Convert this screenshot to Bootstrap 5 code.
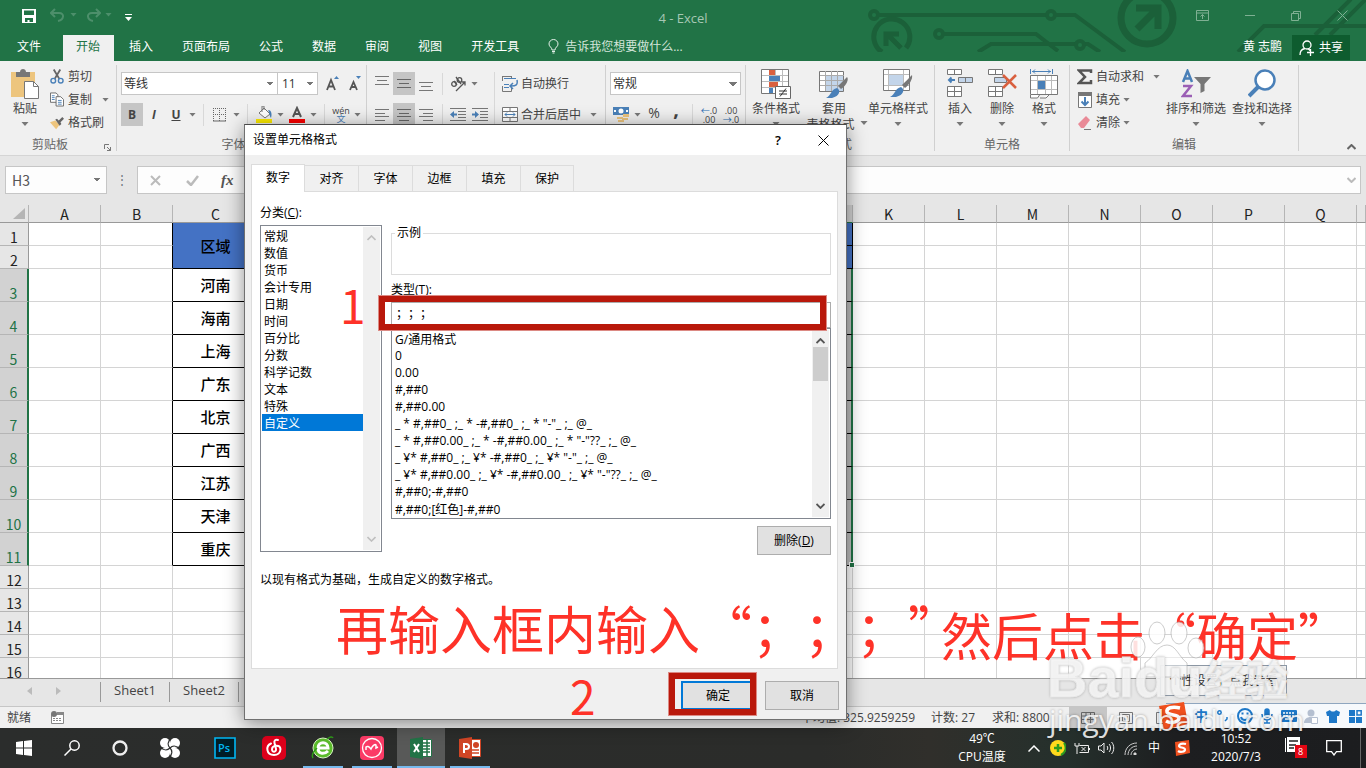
<!DOCTYPE html>
<html lang="zh-CN">
<head>
<meta charset="utf-8">
<meta name="viewport" content="width=device-width, initial-scale=1">
<title>4 - Excel</title>
<link href="https://cdn.jsdelivr.net/npm/bootstrap@5.3.0/dist/css/bootstrap.min.css" rel="stylesheet">
<style>
:root{--xl:#217346;--line:#d4d4d4;--ink:#444}
body{font:12px/16px "Open Sans","Noto Sans CJK SC",sans-serif;color:var(--ink);background:#e6e6e6;height:100vh;overflow:hidden;text-spacing-trim:space-all}
button{border:0;background:none;padding:0;color:inherit;font:inherit;line-height:16px}
svg{display:block;flex:none}
.appbar{background:var(--xl)}
.titlebar{height:35px}
.tabbar{height:26px}
.circuit{right:0;top:0}
.doc-title{color:#a6c7b4;font-size:13px}
.tabbar a{color:#fff;text-decoration:none;padding:4px 14px 0 15px;height:26px;white-space:nowrap}
.tabbar a.file-tab{padding:4px 22px 0 17px}
.tabbar a.on{background:#f0f0f0;color:var(--xl);padding:4px 14px 0 13px}
.share-btn{background:#0e5c2f;color:#fff;width:58px;height:25px}
.ribbon{height:95px;background:#f0f0f0;border-bottom:1px solid #d5d5d5;padding-top:4px}
.rgroup{height:86px;border-right:1px solid #d0d0d0;position:relative;flex:none}
.rbody{height:71px}
.rlabel{color:#666;text-align:center;line-height:17px}
.g-clip{width:117px}.g-font{width:250px}.g-align{width:239px}.g-num{width:140px}.g-style{width:189px}.g-cell{width:135px}.g-edit{width:229px}
.g-clip .rlabel,.g-font .rlabel,.g-align .rlabel,.g-num .rlabel{padding-right:16px}
.t22{width:22px;height:23px;display:flex;align-items:center;justify-content:center}
.t22.on{background:#c5c5c5}
.car{display:inline-block;width:11px;height:4px;background:#777;clip-path:polygon(18% 0,82% 0,50% 100%);flex:none}
.vsep{width:1px;height:22px;background:#d8d8d8;margin:0 5px;flex:none}
.combo{height:23px;border:1px solid #c6c6c6;border-radius:0;background-color:#fff;appearance:none;font:inherit;line-height:16px;padding:0 2px;color:#333;background-image:linear-gradient(45deg,transparent 50%,#777 50%),linear-gradient(-45deg,transparent 50%,#777 50%);background-size:4px 4px;background-position:right 7px center,right 3px center;background-repeat:no-repeat}
.bigbtn{display:flex;flex-direction:column;align-items:center;text-align:center;height:71px;padding-top:4px;white-space:nowrap}
.bigbtn svg{margin-bottom:2px}
.bigbtn .car{margin-top:5px}
.smallbtn{display:flex;align-items:center;height:23px;gap:4px;white-space:nowrap}
.fbar{height:49px;padding:10px 5px 11px}
.namebox{width:102px;height:28px;border:1px solid #c6c6c6;font:14px/20px "Noto Sans CJK SC",sans-serif;color:#555;padding:0 6px;background-color:#fdfdfd;background-position:right 9px center,right 5px center}
.formula{border:1px solid #c6c6c6;background:#fdfdfd;height:28px;width:0}
.formula input{border:0;background:none;outline:0;min-width:0}
.sheet{flex:1 1 0;min-height:0;overflow:hidden;background:#fff}
.gridtab{table-layout:fixed;width:100%;border-collapse:separate;border-spacing:0;font-family:"Noto Sans CJK SC",sans-serif;font-size:14px;color:#222}
.gridtab th,.gridtab td{padding:0;border-right:1px solid var(--line);border-bottom:1px solid var(--line);text-align:center;overflow:hidden;font-weight:400;line-height:16px}
.gridtab thead th{height:18px;background:#e6e6e6;border-right-color:#b5b5b5;border-bottom-color:#999}
.gridtab thead th.sel{background:#d2d2d2;border-bottom-color:var(--xl)}
.gridtab tbody th{background:#e6e6e6;vertical-align:bottom;border-right-color:#999;border-bottom-color:#b5b5b5}
.gridtab .s23{height:23px}.gridtab .s33{height:33px}
.gridtab tbody th.sel{background:#d2d2d2;color:var(--xl);border-right:2px solid var(--xl)}
.gridtab td.dk{border-color:#000}.gridtab td.dkr{border-right-color:#000}
.gridtab td.area{font-size:15px;font-weight:500;color:#000}
.gridtab td.blue{background:#4472c4}
.gridtab td.pick{background:#bfbfbf;border-right:2px solid var(--xl)}
.gridtab td.pick-end{position:relative;overflow:visible}
.fill-handle{right:-4px;bottom:-3px;width:6px;height:6px;background:var(--xl);border:1px solid #fff}
.corner{display:block;margin:3px 3px 3px auto;width:12px;height:11px;background:#b5b5b5;clip-path:polygon(100% 0,100% 100%,0 100%)}
.stabs{height:29px;border-top:1px solid #999;border-bottom:1px solid #c6c6c6;font-size:13px}
.stabs a{color:#444;text-decoration:none;width:69px;height:20px;border-left:1px solid #999;text-align:center;margin-top:3px;line-height:17px}
.stat{height:21px;background:#f0f0f0;white-space:nowrap}
.taskbar{height:40px;background:linear-gradient(90deg,#2b2d2c 0,#2b2c2a 60%,#302f2b 68%,#25302c 78%,#1d1e20 86%,#1c1d1f);color:#fff}
.app{width:48px;height:40px;display:flex;align-items:center;justify-content:center;margin-right:1px;position:relative}
.app.tight{margin-right:0}
.app.run::after{content:"";position:absolute;left:4px;right:4px;bottom:0;height:2px;background:#76b9ed}
.app.act{background:#585958}.app.act::after{left:0;right:0}
.tray{width:24px;height:40px;display:flex;align-items:center;justify-content:center}
.twoline{font-size:12px;line-height:18px;text-align:center}
/* dialog */
.dlg{left:244px;top:124px;width:603px;background:#f0f0f0;border:1px solid #707070;border-top-color:#4a4a4a;color:#000;box-shadow:0 3px 18px rgba(0,0,0,.45);z-index:5}
.dlg-head{height:30px;background:#fff;padding-left:8px}
.dlg-tabs{padding:9px 0 0 6px;height:36px;align-items:flex-end}
.dlg-tabs button{height:26px;width:54px;border:1px solid #dcdcdc;border-left:0;border-bottom:0}
.dlg-tabs button:last-child{width:53px}
.dlg-tabs button.on{width:54px;height:28px;background:#fff;border-left:1px solid #dcdcdc;margin-bottom:-1px;padding-bottom:2px;z-index:1}
.panel{background:#fff;border:1px solid #dcdcdc;margin:0 8px 0 6px;padding:13px 6px 0 8px;height:478px}
.lbox{border:1px solid #828790;background:#fff;padding:1px}
.lbox select{border:0;outline:0;overflow:hidden;background:none;font:inherit;padding:0;color:#000;appearance:none;min-width:0}
.lbox option{height:17px;min-height:17px;line-height:16px;padding:0 2px 1px;white-space:pre}
.lbox option:checked{background:#0078d7 linear-gradient(#0078d7,#0078d7);color:#fff}
.sbar{width:17px;background:#f0f0f0}
.cat{width:122px;height:327px}
.types{height:191px}
.sample{border:1px solid #dcdcdc;height:50px;margin:0;padding:0 0 0 3px}
.sample legend{float:none;width:auto;font-size:12px;line-height:16px;padding:0 2px;margin:0}
.typein{height:26px;border:1px solid #acacac;width:100%;padding:0 4px 5px;outline:0;color:#000;font-family:"Noto Sans CJK SC",sans-serif;text-spacing-trim:space-all}
.dbtn{width:74px;height:29px;border:1px solid #adadad;background:#e1e1e1}
.dbtn.main{border:2px solid #0078d7}
/* annotations */
.redbox{border:6px solid #b9180b;outline:1px solid #dc8a84;z-index:7;pointer-events:none}
.rb1{left:134px;top:171px;width:447px;height:34px}
.rb2{left:424px;top:548px;width:87px;height:42px}
.note{color:#fe3228;z-index:8;white-space:nowrap;font-family:"Noto Sans CJK SC",sans-serif;text-spacing-trim:space-all}
.n1{left:340px;top:279px;font-size:46px;line-height:50px}
.n2{left:570px;top:670px;font-size:46px;line-height:50px}
.n3{left:336px;top:598px;font-size:52px;line-height:60px}
.n4{left:941px;top:604px;font-size:51px;line-height:60px}
.tip{right:79px;bottom:72px;width:127px;height:31px;border:1px solid #8d98a5;background:#f3f3f3;z-index:6;color:#333}
.ime{right:0;bottom:40px;width:200px;height:25px;background:#f6f9fc;border-top:1px solid #8fa6bf;z-index:6}
.ime button{width:22px;height:24px;display:flex;align-items:center;justify-content:center}
.wm{z-index:9;white-space:nowrap;color:rgba(255,255,255,.85);text-shadow:0 0 3px rgba(0,0,0,.35);pointer-events:none}
.wm1{left:1047px;top:646px;font:700 56px/64px "Liberation Sans",sans-serif;-webkit-text-stroke:1px #e8e8e8}
.wm2{left:1204px;top:652px;font:700 42px/52px "Noto Sans CJK SC",sans-serif;-webkit-text-stroke:1px #e8e8e8}
.wm3{left:1049px;top:700px;font:400 30px/40px "Open Sans",sans-serif}
.paw{left:1130px;top:620px;z-index:9;opacity:.85;pointer-events:none}
</style>
</head>
<body class="d-flex flex-column position-relative">

<header class="appbar position-relative flex-shrink-0">
  <svg class="circuit position-absolute" width="501" height="52" viewBox="865 0 501 52" fill="none" stroke="#1b6039" stroke-width="4">
    <circle cx="874" cy="15" r="4"/><path d="M878 15H1047"/><circle cx="1051" cy="15" r="4"/><path d="M1055 15h20l50 37"/>
    <path d="M882 52a18 18 0 1 1 24-4" stroke-width="5"/><path d="M886 46V34h13M888 35l13 13" stroke-width="5"/>
    <circle cx="939" cy="34" r="4"/><path d="M943 34h93l22 17M978 52l13-8h85M1084 44h4l12 8"/><circle cx="1080" cy="45" r="4"/>
    <circle cx="1147" cy="18" r="26" stroke-width="7"/><path d="M1136 8h22v21M1157 9l-20 20" stroke-width="7"/>
    <path d="M1238 52l26-26h102M1315 35l36-36M1330 35l36-36"/>
  </svg>
  <div class="titlebar d-flex align-items-center position-relative">
    <button aria-label="保存" style="margin-left:22px;margin-bottom:4px"><svg width="14" height="14" viewBox="0 0 14 14"><path fill="#fff" fill-rule="evenodd" d="M0 0h14v14H0zM2 1.500V6h10V1.500zM3 9v4h2.500v-2h2v2H11V9z"/></svg></button>
    <button aria-label="撤销" class="d-flex align-items-center" style="margin:0 0 6px 14px"><svg width="15" height="14" viewBox="0 0 15 14" fill="none" stroke="#4d8f6b" stroke-width="2"><path d="M5 1L1 5l4 4M1 5h8c6 0 5 7-1 8"/></svg><i class="car" style="background:#4d8f6b;margin-left:3px"></i></button>
    <button aria-label="恢复" class="d-flex align-items-center" style="margin:0 0 6px 7px"><svg width="15" height="14" viewBox="0 0 15 14" fill="none" stroke="#4d8f6b" stroke-width="2"><path d="M10 1l4 4-4 4M14 5H6c-6 0-5 7 1 8"/></svg><i class="car" style="background:#4d8f6b;margin-left:2px"></i></button>
    <button aria-label="自定义" style="margin-left:11px"><svg width="7" height="7" viewBox="0 0 7 7"><path fill="#fff" d="M0 0h7v1H0zM0 3h7L3.500 7z"/></svg></button>
    <span class="doc-title position-absolute start-50 translate-middle-x">4 - Excel</span>
    <div class="ms-auto d-flex align-items-center position-relative" style="gap:36px;margin:0 18px 4px 0">
      <svg width="13" height="11" viewBox="0 0 13 11" fill="none" stroke="#7fb093"><path d="M.5.5h12v10H.5zM.5 3h12M6.500 9V4.500M4.500 6.500l2-2 2 2"/></svg>
      <svg width="10" height="11" viewBox="0 0 10 11" stroke="#7fb093"><path d="M0 5.500h10"/></svg>
      <svg width="10" height="10" viewBox="0 0 10 10" fill="none" stroke="#7fb093"><path d="M.5 2.500h7v7h-7zM2.500 2V.5h7v7H8"/></svg>
      <svg width="11" height="11" viewBox="0 0 11 11" stroke="#7fb093"><path d="M.5.5l10 10M10.500.5l-10 10"/></svg>
    </div>
  </div>
  <nav class="tabbar d-flex position-relative">
    <a class="file-tab" href="#">文件</a><a class="on" href="#">开始</a><a href="#">插入</a><a href="#">页面布局</a><a href="#">公式</a><a href="#">数据</a><a href="#">审阅</a><a href="#">视图</a><a href="#">开发工具</a>
    <a href="#" class="d-flex" style="color:#d3e5da;gap:5px"><svg width="12" height="15" viewBox="0 0 12 15" fill="none" stroke="#e5f0e9"><path d="M4 11C4 8 1 8 1 5a4.500 4.500 0 0 1 9 0c0 3-3 3-3 6zM4 12.500h3M4.500 14h2"/></svg>告诉我您想要做什么...</a>
    <span class="ms-auto text-white pt-1" style="margin-right:10px">黄 志鹏</span>
    <button class="share-btn d-flex align-items-center justify-content-center gap-1" style="margin-right:16px"><svg width="16" height="16" viewBox="0 0 16 16" fill="none" stroke="#fff" stroke-width="1.300"><circle cx="8" cy="5" r="4"/><path d="M1 15c0-4 2-6 5-6.500M9 8.500l2 2M8 12.500h7M11.500 9v7"/></svg>共享</button>
  </nav>
</header>

<section class="ribbon d-flex flex-shrink-0">
  <div class="rgroup g-clip">
    <div class="rbody d-flex">
      <button class="bigbtn" style="width:50px"><svg width="30" height="30" viewBox="0 0 30 30"><path fill="#edc57e" d="M1 3h24v25H1z"/><path fill="#777" d="M6 3h4c0-4 6-4 6 0h4v5H6z"/><path fill="#fff" stroke="#777" d="M14.500 12.500h9l5 5v12h-14z"/><path fill="none" stroke="#777" d="M23.500 12.500v5h5"/></svg>粘贴<i class="car"></i></button>
      <div>
        <button class="smallbtn"><svg width="14" height="16" viewBox="0 0 15 16" fill="none" stroke-width="2"><path stroke="#666" d="M4 0l6 10M11 0L5 10"/><g stroke="#4a80b8"><circle cx="3.500" cy="12" r="2.500" stroke-width="1.500"/><circle cx="11.500" cy="12" r="2.500" stroke-width="1.500"/></g></svg>剪切</button>
        <button class="smallbtn"><svg width="14" height="15" viewBox="0 0 15 15" fill="#fff" stroke="#666"><path d="M.5.500h6l2 2v8h-8z"/><path d="M6.500 4.500h5l3 3v7h-8z"/><path stroke="#4a80b8" d="M2 3.500h3M2 5.500h3M2 7.500h3M8.500 8.500h4M8.500 10.500h4M8.500 12.500h4"/></svg>复制<i class="car ms-1"></i></button>
        <button class="smallbtn"><svg width="14" height="14" viewBox="0 0 16 14"><path fill="#edc57e" d="M0 6l6-2 5 5-4 5z"/><path fill="#666" d="M6 3l2-1 2 2 4-4 2 2-4 4 1 2-2 2z"/></svg>格式刷</button>
      </div>
    </div>
    <div class="rlabel">剪贴板</div>
    <svg class="position-absolute" style="right:5px;bottom:0" width="7" height="7" viewBox="0 0 7 7" fill="none" stroke="#777"><path d="M.5 5V.5H5M3 3l3.500 3.500M6.500 3v3.500H3"/></svg>
  </div>

  <div class="rgroup g-font">
    <div class="rbody" style="padding:7px 0 0 4px">
      <div class="d-flex align-items-center">
        <select class="combo" aria-label="字体" style="width:157px"><option>等线</option></select><select class="combo border-start-0" aria-label="字号" style="width:40px;padding-left:4px"><option>11</option></select>
        <button class="t22 ms-1" aria-label="增大字号"><svg width="14" height="15" viewBox="0 0 14 15" fill="none" stroke="#555" stroke-width="1.800"><path d="M1 14L5 4l4 10M2.500 10.500h5"/><path fill="#4a80b8" stroke="none" d="M8 3h5l-2.500-3z"/></svg></button>
        <button class="t22" aria-label="减小字号"><svg width="14" height="15" viewBox="0 0 14 15" fill="none" stroke="#555" stroke-width="1.800"><path d="M2 14l3.500-8L9 14M3.500 11h4"/><path fill="#4a80b8" stroke="none" d="M8 0h5l-2.500 3z"/></svg></button>
      </div>
      <div class="d-flex align-items-center" style="margin-top:8px">
        <button class="t22 on fw-bold">B</button><button class="t22 fst-italic fw-bold">I</button><button class="t22 fw-bold text-decoration-underline">U</button><i class="car"></i><i class="vsep"></i>
        <button class="t22" aria-label="边框"><svg width="14" height="14" viewBox="0 0 14 14" stroke="#666" fill="none"><path stroke-dasharray="1 1" d="M0 .5h13M0 6.500h13M.5 0v13M6.500 0v13M12.500 0v13"/><path d="M0 13h13"/></svg></button><i class="car"></i><i class="vsep"></i>
        <button class="t22" aria-label="填充颜色"><svg width="17" height="17" viewBox="0 0 17 17"><path fill="#fff" stroke="#777" d="M8 2l6 6-5 4-6-5z"/><path fill="none" stroke="#777" d="M6 6V0h2v4"/><path fill="#4a80b8" d="M12 4c4 0 4 5 3 8-2-2-1-5-3-8z"/><path fill="#ffed00" d="M0 13h16v4H0z"/></svg></button><i class="car"></i>
        <button class="t22" aria-label="字体颜色"><svg width="16" height="17" viewBox="0 0 16 17"><path fill="none" stroke="#555" stroke-width="2" d="M4 11l4-9 4 9M5 8h6"/><path fill="#f00" d="M0 13h16v4H0z"/></svg></button><i class="car"></i><i class="vsep"></i>
        <button class="t22" aria-label="拼音" style="flex-direction:column;line-height:8px;font-size:9px">wén<span style="color:#4a80b8">文</span></button><i class="car"></i>
      </div>
    </div>
    <div class="rlabel">字体</div>
  </div>

  <div class="rgroup g-align">
    <div class="rbody d-flex" style="padding:7px 0 0 4px">
      <div>
        <div class="d-flex align-items-center">
          <button class="t22" aria-label="顶端对齐"><svg width="14" height="15" viewBox="0 0 14 15" stroke="#777"><path d="M0 .5h14M2 4.500h10M0 8.500h14"/></svg></button><button class="t22 on" aria-label="垂直居中"><svg width="14" height="15" viewBox="0 0 14 15" stroke="#666"><path d="M0 3.500h14M2 7.500h10M0 11.500h14"/></svg></button><button class="t22" aria-label="底端对齐"><svg width="14" height="15" viewBox="0 0 14 15" stroke="#777"><path d="M0 6.500h14M2 10.500h10M0 14.500h14"/></svg></button><i class="vsep" style="margin-right:4px"></i>
        </div>
        <div class="d-flex align-items-center" style="margin-top:8px">
          <button class="t22" aria-label="左对齐"><svg width="14" height="12" viewBox="0 0 14 12" stroke="#777"><path d="M0 .5h14M0 4.500h10M0 7.500h14M0 11.500h10"/></svg></button><button class="t22 on" aria-label="居中"><svg width="14" height="12" viewBox="0 0 14 12" stroke="#666"><path d="M0 .5h14M2 4.500h10M0 7.500h14M2 11.500h10"/></svg></button><button class="t22" aria-label="右对齐"><svg width="14" height="12" viewBox="0 0 14 12" stroke="#777"><path d="M0 .5h14M4 4.500h10M0 7.500h14M4 11.500h10"/></svg></button><i class="vsep" style="margin-right:4px"></i>
        </div>
      </div>
      <div style="width:48px;border-right:1px solid #d8d8d8">
        <div class="d-flex align-items-center"><button class="t22" aria-label="方向"><svg width="17" height="16" viewBox="0 0 17 16" fill="none" stroke="#555" stroke-width="1.300"><circle cx="4" cy="8" r="2.300"/><path d="M4 5l3 4M6 1l5 7"/><circle cx="9.500" cy="4" r="2.300"/><path d="M6 15l9-9M11.500 6H15v3.500"/></svg></button><i class="car"></i></div>
        <div class="d-flex align-items-center" style="margin-top:8px"><button class="t22" aria-label="减少缩进"><svg width="16" height="13" viewBox="0 0 16 13"><path stroke="#777" d="M0 .5h16M8 3.500h8M8 6.500h8M8 9.500h8M0 12.500h16"/><path fill="#4a80b8" d="M0 6.500L4 3v2.500h3v2H4V10z"/></svg></button><button class="t22" aria-label="增加缩进"><svg width="16" height="13" viewBox="0 0 16 13"><path stroke="#777" d="M0 .5h16M8 3.500h8M8 6.500h8M8 9.500h8M0 12.500h16"/><path fill="#4a80b8" d="M7 6.500L3 3v2.500H0v2h3V10z"/></svg></button></div>
      </div>
      <div style="padding-left:7px">
        <button class="smallbtn" style="gap:3px"><svg width="16" height="16" viewBox="0 0 16 16" fill="none"><path stroke="#777" d="M.5 0v5M.5 10v5.500h9V12M9.500 0v2"/><path stroke="#4a80b8" d="M2 2.500h12M2 8.500h5M2 11.500h5"/><path stroke="#777" d="M0 .5h10"/><path stroke="#4a80b8" stroke-width="1.500" d="M15 4c1 5-1 6-6 6M11 7l-3 3 3 3"/></svg>自动换行</button>
        <button class="smallbtn" style="gap:3px;margin-top:8px"><svg width="16" height="15" viewBox="0 0 16 15" fill="#fff" stroke="#777"><path d="M.5.500h15v14H.5zM.5 4.500h15M.5 10.500h15M8 .5v4M8 10.500v4"/><path stroke="#4a80b8" d="M3 7.500h10M5 5.500l-2 2 2 2M11 5.500l2 2-2 2"/></svg>合并后居中<i class="car ms-1"></i></button>
      </div>
    </div>
    <div class="rlabel">对齐方式</div>
  </div>

  <div class="rgroup g-num">
    <div class="rbody" style="padding:7px 0 0 4px">
      <select class="combo d-block" aria-label="数字格式" style="width:131px"><option>常规</option></select>
      <div class="d-flex align-items-center" style="margin-top:8px">
        <button class="t22" aria-label="会计格式"><svg width="16" height="16" viewBox="0 0 16 16"><path fill="#4a80b8" d="M0 0h16v8H0z"/><circle cx="8" cy="4" r="2.500" fill="#fff"/><path fill="#fff" d="M1 3h2v2H1zM13 3h2v2h-2z"/><path fill="#edc57e" d="M10 7h6v3h-6zM9 11h6v2H9zM4 10h6v2H4zM5 13h6v2H5z"/></svg></button><i class="car"></i>
        <button class="t22 pb-1" style="font-size:14px">%</button><button class="t22 fw-bold" style="font-size:20px;line-height:8px;align-items:flex-start;padding-top:2px">,</button><i class="vsep"></i>
        <button class="t22" aria-label="增加小数位" style="flex-direction:column;font-size:9px;line-height:9px;letter-spacing:0"><span><span style="color:#2d6fb5">←</span>.0</span><span>.00</span></button>
        <button class="t22" aria-label="减少小数位" style="flex-direction:column;font-size:9px;line-height:9px"><span>.00</span><span><span style="color:#2d6fb5">→</span>.0</span></button>
      </div>
    </div>
    <div class="rlabel">数字</div>
  </div>

  <div class="rgroup g-style">
    <div class="rbody d-flex" style="padding-left:4px">
      <button class="bigbtn" style="width:52px"><svg width="30" height="30" viewBox="0 0 30 30"><path fill="#fff" stroke="#777" d="M.5.5h27v24H.5z"/><path stroke="#bbb" d="M1 6.500h26M1 12.500h26M1 18.500h26M14.500 1v23M21.500 1v23"/><path fill="#d9603f" d="M8 1h6v5H8zM8 13h9v5H8z"/><path fill="#4a80b8" d="M8 7h11v5H8zM8 19h4v5H8z"/><path fill="#fff" stroke="#666" d="M14.500 17.500h15v12h-15z"/><path stroke="#333" d="M18 22h8M18 25h8M25 19.500l-6 8"/></svg>条件格式<i class="car"></i></button>
      <button class="bigbtn" style="width:64px"><svg width="30" height="30" viewBox="0 0 30 30"><path fill="#fff" stroke="#777" d="M.5 2.500h24v20H.5z"/><path fill="#c3d5ea" d="M6 7h18v15H6z"/><path stroke="#aaa" d="M1 6.500h24M1 11.500h24M1 16.500h24M6.500 2v20M12.500 2v20M18.500 2v20"/><path fill="#777" d="M28 8c2 2 0 8-6 12l-3-3c4-4 7-7 9-9z"/><path fill="#4a80b8" d="M18 19c4 2 3 8-5 10H7c5-2 5-9 11-10z"/></svg><span style="line-height:15px;padding-left:8px">套用<span class="pe-2"></span><br>表格格式<i class="car ms-1 mb-1"></i></span></button>
      <button class="bigbtn" style="width:64px"><svg width="30" height="30" viewBox="0 0 30 30"><path fill="#fff" stroke="#777" d="M.5.500h26v21H.5z"/><path stroke="#bbb" d="M1 5.500h25M1 16.500h25M5.500 1v20M20.500 1v20"/><path fill="#c3d5ea" d="M6 6h14v10H6z"/><path fill="#777" d="M29 6c1 4-3 10-7 13l-3-3c4-4 7-7 10-10z"/><path fill="#4a80b8" d="M18 18c4 2 3 8-5 10H7c5-2 5-9 11-10z"/></svg>单元格样式<i class="car"></i></button>
    </div>
    <div class="rlabel">样式</div>
  </div>

  <div class="rgroup g-cell">
    <div class="rbody d-flex" style="padding-left:4px">
      <button class="bigbtn" style="width:42px"><svg width="28" height="30" viewBox="0 0 28 30" fill="#fff" stroke="#777"><path d="M1.500.5h14v5h-14zM8.500.5v5M1.500 17.500h14v10h-14zM8.500 17.500v10M1.500 22.500h14"/><path fill="#c3d5ea" d="M12.500 8.500h14v5h-14zM19.500 8.500v5"/><path fill="none" stroke="#4a80b8" stroke-width="2" d="M9 11H3M5.500 8.500L3 11l2.500 2.500"/></svg>插入<i class="car"></i></button>
      <button class="bigbtn" style="width:42px"><svg width="30" height="30" viewBox="0 0 30 30" fill="#fff" stroke="#777"><path d="M1.500.5h14v5h-14zM8.500.5v5M1.500 17.500h14v10h-14zM8.500 17.500v10M1.500 22.500h14"/><path fill="#c3d5ea" d="M7.500 8.500h12v5h-12z"/><path fill="none" stroke="#d9603f" stroke-width="2.500" d="M16 6l13 13M29 6L16 19"/></svg>删除<i class="car"></i></button>
      <button class="bigbtn" style="width:42px"><svg width="28" height="30" viewBox="0 0 28 30" fill="#fff" stroke="#777"><path d="M.5 6.500h27v19H.5z"/><path stroke="#bbb" d="M1 11.500h26M1 20.500h26M7.500 7v18M15.500 7v18M21.500 7v18"/><path fill="#4a80b8" stroke="none" d="M8 12h7v8H8z"/><path fill="none" stroke="#4a80b8" d="M.5 0v5M22.500 0v5M2 2.500h19M5 .5l-2 2 2 2M18 .5l2 2-2 2"/><path d="M.5 26v3h7l2-3M10 29h6l3-3"/></svg>格式<i class="car"></i></button>
    </div>
    <div class="rlabel">单元格</div>
  </div>

  <div class="rgroup g-edit">
    <div class="rbody d-flex" style="padding-left:7px">
      <div style="width:86px">
        <button class="smallbtn" style="gap:3px"><svg width="16" height="16" viewBox="0 0 16 16"><path fill="none" stroke="#555" stroke-width="2.500" d="M14 4V1.500H2l6 6.500-6 6h12V11"/></svg>自动求和<i class="car ms-1"></i></button>
        <button class="smallbtn" style="gap:3px"><svg width="16" height="16" viewBox="0 0 16 16"><path fill="#fff" stroke="#777" d="M1.500 2.500h13v13h-13z"/><path fill="#777" d="M1 0h14v4H1z"/><path fill="none" stroke="#4a80b8" stroke-width="2" d="M8 5v8M4.500 9.500L8 13l3.500-3.500"/></svg>填充<i class="car" style="margin-left:-2px"></i></button>
        <button class="smallbtn" style="gap:3px"><svg width="16" height="14" viewBox="0 0 16 14"><path fill="#e98a97" d="M1 8l8-8 4 4-6 8H4z"/><path stroke="#777" d="M7 13.500h7"/></svg>清除<i class="car" style="margin-left:-2px"></i></button>
      </div>
      <button class="bigbtn" style="width:66px"><svg width="30" height="30" viewBox="0 0 30 30" fill="none" stroke-width="2.500"><path stroke="#4a80b8" d="M2 13L6.500 2 11 13M3.500 9.500h6"/><path stroke="#9b5fb5" d="M2 17h8L2 27h9"/><path fill="#777" d="M13 8h17l-6.500 7v7l-4 2v-9z"/></svg>排序和筛选<i class="car"></i></button>
      <button class="bigbtn" style="width:66px"><svg width="28" height="30" viewBox="0 0 28 30"><path stroke="#4a80b8" stroke-width="4" d="M1 27l10-10"/><circle cx="17" cy="11" r="9.500" fill="#fff" stroke="#4a80b8" stroke-width="2.500"/></svg>查找和选择<i class="car"></i></button>
    </div>
    <div class="rlabel">编辑</div>
  </div>
  <button class="ms-auto align-self-end" aria-label="折叠功能区" style="margin:0 10px 5px 0"><svg width="9" height="6" viewBox="0 0 9 6" fill="none" stroke="#666" stroke-width="2"><path d="M.5 5l4-4 4 4"/></svg></button>
</section>

<section class="fbar d-flex flex-shrink-0 align-items-center">
  <select class="combo namebox" aria-label="名称框"><option>H3</option></select>
  <span class="text-secondary text-center" style="width:30px">⋮</span>
  <div class="formula flex-grow-1 d-flex align-items-center">
    <button aria-label="取消输入" style="margin-left:12px"><svg width="11" height="11" viewBox="0 0 11 11" stroke="#bbb" stroke-width="2"><path d="M1 1l9 9M10 1l-9 9"/></svg></button>
    <button aria-label="输入" style="margin-left:25px"><svg width="13" height="11" viewBox="0 0 13 11" fill="none" stroke="#bbb" stroke-width="2.500"><path d="M1 6l4 4 7-9"/></svg></button>
    <button style="margin-left:22px;font:italic 700 15px/16px 'Liberation Serif',serif;color:#555">fx</button>
    <input class="flex-grow-1" aria-label="编辑栏">
    <svg class="me-1" width="9" height="6" viewBox="0 0 9 6" fill="none" stroke="#bbb" stroke-width="2"><path d="M.5 1l4 4 4-4"/></svg>
  </div>
</section>

<main class="sheet">
  <table class="gridtab" id="grid">
    <colgroup><col style="width:29px"><col style="width:72px"><col style="width:72px"><col style="width:86px"><col style="width:85px"><col style="width:85px"><col style="width:85px"><col style="width:85px"><col style="width:85px"><col style="width:85px"><col style="width:84px"><col style="width:72px"><col style="width:72px"><col style="width:72px"><col style="width:72px"><col style="width:72px"><col style="width:72px"><col style="width:72px"><col></colgroup>
    <thead></thead><tbody></tbody>
  </table>
</main>

<footer class="flex-shrink-0">
  <div class="stabs d-flex">
    <div class="d-flex align-items-center" style="width:100px;gap:24px;padding-left:27px;height:24px"><svg width="5" height="8" viewBox="0 0 5 8"><path fill="#bbb" d="M5 0v8L0 4z"/></svg><svg width="5" height="8" viewBox="0 0 5 8"><path fill="#bbb" d="M0 0v8l5-4z"/></svg></div>
    <a href="#">Sheet1</a><a href="#">Sheet2</a><a href="#">Sheet3</a>
  </div>
  <div class="stat d-flex align-items-center">
    <span style="margin-left:7px;width:44px">就绪</span>
    <svg width="13" height="13" viewBox="0 0 13 13"><path fill="#fff" stroke="#888" d="M.5 3.500h12v9H.5z"/><path fill="#888" d="M6 1h7v3H6z"/><circle cx="3" cy="3" r="3" fill="#777"/><path stroke="#888" stroke-dasharray="2 1" d="M2 7.500h9M2 9.500h9"/></svg>
    <div class="ms-auto d-flex align-items-center" style="width:566px"><span class="text-end" style="width:115px">平均值: 325.9259259</span><span style="margin-left:16px;width:61px">计数: 27</span><span style="width:77px">求和: 8800</span>
      <button class="d-flex align-items-center justify-content-center" aria-label="普通视图" style="width:38px;height:21px;background:#c6c6c6"><svg width="14" height="12" viewBox="0 0 14 12" fill="none" stroke="#666"><path d="M.5.5h13v11H.5zM.5 4h13M.5 7.500h13M5 .5v11M9.500.5v11"/></svg></button>
      <button aria-label="页面布局" style="margin-left:12px"><svg width="14" height="12" viewBox="0 0 14 12" fill="none" stroke="#777"><path d="M.5.5h13v11H.5zM3.500 2.500h7v7h-7zM5 5h4M5 7h4"/></svg></button>
      <button aria-label="分页预览" style="margin-left:23px"><svg width="14" height="12" viewBox="0 0 14 12" fill="none" stroke="#777"><path d="M.5.5h13v11H.5zM4.500.5v6h5v-6"/></svg></button>
    </div>
  </div>
  <div class="taskbar d-flex align-items-center">
    <button class="app tight" aria-label="开始"><svg width="16" height="16" viewBox="0 0 16 16" fill="#fff"><path d="M0 2l7-1v6.500H0zM8 1l8-1v7.500H8zM0 8.500h7V15l-7-1zM8 8.500h8V16l-8-1z"/></svg></button>
    <button class="app tight" aria-label="搜索"><svg width="16" height="16" viewBox="0 0 16 16" fill="none" stroke="#fff" stroke-width="1.500"><circle cx="10.500" cy="5.500" r="4.700"/><path d="M7 9l-6.500 6.500"/></svg></button>
    <button class="app tight" aria-label="Cortana"><svg width="16" height="16" viewBox="0 0 16 16" fill="none" stroke="#eee" stroke-width="2.300"><circle cx="8" cy="8" r="6.500"/></svg></button>
    <button class="app" aria-label="风车" style="margin-left:2px;margin-right:7px"><svg width="20" height="20" viewBox="0 0 20 20" fill="#fff"><circle cx="5" cy="5" r="5"/><circle cx="15" cy="5" r="5"/><circle cx="5" cy="15" r="5"/><circle cx="15" cy="15" r="5"/><circle cx="10" cy="10" r="5"/><path fill="none" stroke="#2b2d2c" stroke-width="1.200" d="M10 10c-3-3-2-7 1-10M10 10c3-3 7-2 10 1M10 10c3 3 2 7-1 10M10 10c-3 3-7 2-10-1"/></svg></button>
    <button class="app" aria-label="Photoshop"><svg width="22" height="22" viewBox="0 0 22 22"><path fill="#001d26" stroke="#00b7f4" stroke-width="1.600" d="M1 1h20v20H1z"/><text x="4" y="15" font-size="11" font-weight="600" fill="#00b7f4">Ps</text></svg></button>
    <button class="app" aria-label="音乐"><svg width="24" height="24" viewBox="0 0 24 24"><rect width="24" height="24" rx="5" fill="#dd001b"/><path fill="none" stroke="#fff" stroke-width="2" stroke-linecap="round" d="M16 4c-3-1-4 1-3.500 3l1.500 6c.5 3.500-4 3.500-4 .5 0-4.500 8-5.500 8.500-.5 0 4-3 6-6.500 6-8 0-8.500-9-3-11.500"/></svg></button>
    <button class="app run" aria-label="浏览器"><svg width="24" height="24" viewBox="0 0 24 24"><circle cx="12" cy="12" r="10" fill="#5bbb2b" stroke="#d9f5c4"/><path fill="none" stroke="#fff" stroke-width="3" d="M7 12h10c0-7-10-7-10 0s7 6 10 3"/><path fill="none" stroke="#2f9b18" stroke-width="1.500" d="M2 22c-2-3 2-8 4-10M16 3c3-2 5-3 6-1"/></svg></button>
    <button class="app run" aria-label="美图"><svg width="24" height="24" viewBox="0 0 24 24"><rect width="24" height="24" rx="4" fill="#fb3b66"/><circle cx="12" cy="12" r="9.500" fill="none" stroke="#fff" stroke-width="1.300"/><path fill="none" stroke="#fff" stroke-width="1.500" d="M6 14v-3c1-1 3-1 5 2 2-4 4-5 5-4v3l2-1"/></svg></button>
    <button class="app run act" aria-label="Excel"><svg width="22" height="22" viewBox="0 0 22 22"><path fill="#fff" stroke="#217346" d="M11 2.500h10.500v17H11z"/><path stroke="#217346" stroke-width="1.500" d="M13 6h7M13 9h7M13 12h7M13 15h7M17 3v16"/><path fill="#217346" d="M0 2l13-2v22L0 20z"/><path stroke="#fff" stroke-width="2" d="M4 7l5 8M9 7l-5 8"/></svg></button>
    <button class="app run" aria-label="PowerPoint"><svg width="22" height="22" viewBox="0 0 22 22"><path fill="#fff" stroke="#d04525" d="M11 2.500h10.500v17H11z"/><circle cx="17" cy="8" r="3" fill="#d04525"/><path stroke="#d04525" stroke-width="1.500" d="M13 13h7M13 16h7"/><path fill="#d04525" d="M0 2l13-2v22L0 20z"/><path fill="none" stroke="#fff" stroke-width="2" d="M5 16V7h2c4 0 4 5 0 5H5"/></svg></button>
    <div class="ms-auto d-flex align-items-center">
      <div class="twoline" style="width:80px">49℃<br>CPU温度</div>
      <button class="tray" aria-label="显示隐藏的图标"><svg width="12" height="7" viewBox="0 0 12 7" fill="none" stroke="#fff" stroke-width="1.500"><path d="M.5 6.500L6 1l5.500 5.500"/></svg></button>
      <button class="tray" aria-label="安全卫士"><svg width="16" height="16" viewBox="0 0 16 16"><circle cx="8" cy="8" r="8" fill="#ffd91c"/><path fill="none" stroke="#2c9b1e" stroke-width="2" d="M14 3a8 8 0 0 1-3 12"/><path stroke="#2c9b1e" stroke-width="2.500" d="M8 4v8M4 8h8"/></svg></button>
      <button class="tray" aria-label="电源"><svg width="16" height="13" viewBox="0 0 16 13" fill="none" stroke="#eee"><path d="M1 1v3h4V1M3 4v8M5.500 3.500h9v7h-9M15.500 6v2M7.500 5l4 4M11.500 5l-4 4"/></svg></button>
      <button class="tray" aria-label="音量"><svg width="17" height="14" viewBox="0 0 17 14" fill="none" stroke="#eee"><path d="M.5 5v4H3l3 3V2L3 5zM9 5c1 1 1 3 0 4M11 3c2 2 2 6 0 8M13.500 1c3 3 3 9 0 12"/></svg></button>
      <button class="tray" aria-label="网络"><svg width="13" height="13" viewBox="0 0 13 13" fill="none" stroke="#ccc"><path d="M1 13C1 6 6 1 13 1M4 13c0-5 4-9 9-9M7 13c0-3 3-6 6-6"/><path fill="#fff" d="M10 11h2v2h-2z"/></svg></button>
      <button class="tray">中</button>
      <button class="tray" style="width:32px" aria-label="搜狗"><svg width="16" height="16" viewBox="0 0 16 16"><path fill="#f0501e" d="M1 2l14-2 1 13-14 3z"/><path fill="none" stroke="#fff" stroke-width="2.200" d="M12 4c-4-1-7 0-7 2s6 1 6 3.500S6 12.500 4 11"/></svg></button>
      <div class="twoline" style="width:76px">10:52<br>2020/7/3</div>
      <button class="tray position-relative" style="width:44px" aria-label="新闻"><svg width="22" height="22" viewBox="0 0 22 22"><path stroke="#fff" d="M.5 1v14"/><path fill="#fff" d="M2 0h13v15H2z"/><path stroke="#222" stroke-width="1.500" d="M4 4h9M4 8h7M4 11h5"/><path fill="#e30613" d="M10 8h12v13H10z"/><text x="13" y="18" font-size="9" fill="#fff">8</text></svg></button>
      <button class="tray" style="margin-left:4px" aria-label="通知"><svg width="16" height="16" viewBox="0 0 16 16" fill="none" stroke="#fff" stroke-width="1.300"><path d="M.7.7h14.600v11H10.500L8 15l-2.500-3.300H.7z"/></svg></button>
      <i style="width:1px;height:40px;background:#666;margin:0 5px 0 14px"></i>
    </div>
  </div>
</footer>

<section class="dlg position-absolute" role="dialog" aria-labelledby="dt">
  <div class="dlg-head d-flex align-items-center">
    <span id="dt">设置单元格格式</span>
    <button class="ms-auto fw-semibold" aria-label="帮助" style="width:20px;font-size:13px">?</button>
    <button aria-label="关闭" style="margin:0 17px 0 30px"><svg width="11" height="11" viewBox="0 0 11 11" stroke="#000"><path d="M.5.5l10 10M10.500.5l-10 10"/></svg></button>
  </div>
  <div class="dlg-tabs d-flex"><button class="on">数字</button><button>对齐</button><button>字体</button><button>边框</button><button>填充</button><button>保护</button></div>
  <div class="panel">
    <div class="d-flex" style="gap:9px">
      <div>
        <label for="cat" class="d-block" style="height:20px">分类(<u>C</u>):</label>
        <div class="lbox cat d-flex">
          <select id="cat" size="19" class="flex-grow-1"><option>常规</option><option>数值</option><option>货币</option><option>会计专用</option><option>日期</option><option>时间</option><option>百分比</option><option>分数</option><option>科学记数</option><option>文本</option><option>特殊</option><option selected>自定义</option></select>
          <div class="sbar d-flex flex-column align-items-center justify-content-between py-2"><svg width="9" height="6" viewBox="0 0 9 6" fill="none" stroke="#bfbfbf" stroke-width="1.600"><path d="M.5 5l4-4 4 4"/></svg><svg width="9" height="6" viewBox="0 0 9 6" fill="none" stroke="#bfbfbf" stroke-width="1.600"><path d="M.5 1l4 4 4-4"/></svg></div>
        </div>
      </div>
      <div class="flex-grow-1" style="padding-top:20px">
        <fieldset class="sample"><legend>示例</legend></fieldset>
        <label for="ty" class="d-block" style="margin-top:7px;height:20px">类型(<u>T</u>):</label>
        <input id="ty" class="typein d-block" value="；；；">
        <div class="lbox types d-flex">
          <select size="11" class="flex-grow-1" aria-label="格式代码"><option>G/通用格式</option><option>0</option><option>0.00</option><option>#,##0</option><option>#,##0.00</option><option>_ * #,##0_ ;_ * -#,##0_ ;_ * "-"_ ;_ @_ </option><option>_ * #,##0.00_ ;_ * -#,##0.00_ ;_ * "-"??_ ;_ @_ </option><option>_ ¥* #,##0_ ;_ ¥* -#,##0_ ;_ ¥* "-"_ ;_ @_ </option><option>_ ¥* #,##0.00_ ;_ ¥* -#,##0.00_ ;_ ¥* "-"??_ ;_ @_ </option><option>#,##0;-#,##0</option><option>#,##0;[红色]-#,##0</option></select>
          <div class="sbar d-flex flex-column align-items-center py-2"><svg width="9" height="6" viewBox="0 0 9 6" fill="none" stroke="#555" stroke-width="1.800"><path d="M.5 5l4-4 4 4"/></svg><i style="width:15px;height:34px;background:#cdcdcd;margin-top:3px"></i><svg class="mt-auto" width="9" height="6" viewBox="0 0 9 6" fill="none" stroke="#555" stroke-width="1.800"><path d="M.5 1l4 4 4-4"/></svg></div>
        </div>
        <button class="dbtn d-block ms-auto" style="margin-top:7px">删除(<u>D</u>)</button>
      </div>
    </div>
    <p class="mb-0" style="margin-top:17px">以现有格式为基础，生成自定义的数字格式。</p>
  </div>
  <div class="d-flex justify-content-end" style="padding:12px 7px 9px;gap:10px"><button class="dbtn main">确定</button><button class="dbtn">取消</button></div>
  <div class="redbox rb1 position-absolute"></div>
  <div class="redbox rb2 position-absolute"></div>
</section>

<div class="note n1 position-absolute">1</div>
<div class="note n2 position-absolute">2</div>
<div class="note n3 position-absolute">再输入框内输入“；；；”</div>
<div class="note n4 position-absolute">然后点击“确定”</div>

<div class="tip position-absolute d-flex align-items-center justify-content-center">个性设置，点我看看</div>
<div class="ime position-absolute d-flex justify-content-end" style="color:#1e78c8">
  <svg class="position-absolute" style="left:-8px;bottom:-2px" width="30" height="28" viewBox="0 0 30 28"><path fill="#f0501e" d="M1 4l25-4 4 22-24 6z"/><path fill="none" stroke="#fff" stroke-width="3.500" d="M22 6C14 4 8 6 9 10s12 2 12 6-8 6-13 3"/></svg>
  <button class="fw-bold" style="font-size:14px">中</button>
  <button aria-label="标点"><svg width="12" height="12" viewBox="0 0 12 12" fill="none" stroke="#1e78c8" stroke-width="1.500"><circle cx="2.500" cy="2.500" r="1.700"/><path d="M10 7v2l-2 2"/></svg></button>
  <button aria-label="表情"><svg width="16" height="16" viewBox="0 0 16 16" fill="none" stroke="#1e78c8" stroke-width="2"><circle cx="8" cy="8" r="7"/><path d="M4 9c1 4 7 4 8 0M5.500 4.500v2M10.500 4.500v2"/></svg></button>
  <button aria-label="语音"><svg width="12" height="16" viewBox="0 0 12 16" fill="none" stroke="#1e78c8" stroke-width="1.500"><rect x="4" y="1" width="4" height="8" rx="2" fill="#1e78c8"/><path d="M1 6c0 8 10 8 10 0M6 12v3M3 15h6"/></svg></button>
  <button aria-label="键盘"><svg width="16" height="12" viewBox="0 0 16 12"><rect width="16" height="12" rx="1" fill="#1e78c8"/><path stroke="#fff" stroke-width="1.500" stroke-dasharray="2 1" d="M2 3h12M2 6h12"/><path stroke="#fff" stroke-width="1.500" d="M4 9h8"/></svg></button>
  <button aria-label="用户"><svg width="14" height="15" viewBox="0 0 14 15" fill="#b4bfd0"><circle cx="7" cy="4" r="3.500"/><path d="M0 14c0-8 13-8 13 0z"/><path fill="#fff" stroke="#b4bfd0" d="M7.500 8.500h6v6h-6z"/></svg></button>
  <button aria-label="皮肤"><svg width="14" height="13" viewBox="0 0 14 13"><path fill="#1e78c8" d="M4 0c1 2 5 2 6 0l4 2-1 4h-2v7H3V6H1L0 2z"/></svg></button>
  <button aria-label="工具"><svg width="13" height="13" viewBox="0 0 13 13" fill="#1e78c8"><path d="M0 0h6v6H0zM0 7h6v6H0zM7 7h6v6H7z"/><path fill="none" stroke="#1e78c8" stroke-width="1.500" d="M8 .8h4.200V5H8z"/></svg></button>
</div>

<svg class="paw position-absolute" width="76" height="60" viewBox="0 0 76 60" fill="#fff" stroke="#aaa" stroke-width=".7"><ellipse cx="8" cy="27" rx="7" ry="10"/><ellipse cx="27" cy="13" rx="8" ry="11"/><ellipse cx="49" cy="13" rx="8" ry="11"/><ellipse cx="66" cy="28" rx="8" ry="10"/><path d="M37 25c9 0 12 12 20 18v14H15V43c8-5 12-18 22-18z" fill-opacity=".6"/></svg>
<div class="wm wm1 position-absolute">Baidu</div>
<div class="wm wm2 position-absolute">经验</div>
<div class="wm wm3 position-absolute">jingyan.baidu.com</div>

<script>
const cols = [...'ABCDEFGHIJKLMNOPQ', ''];
const areas = ['河南','海南','上海','广东','北京','广西','江苏','天津','重庆'];
document.querySelector('#grid thead').innerHTML =
  '<tr><th><i class="corner"></i></th>' + cols.map(c => `<th class="${'HIJ'.includes(c) && c ? 'sel' : ''}">${c}</th>`).join('') + '</tr>';
let html = '';
for (let r = 1; r <= 16; r++) {
  const chosen = r >= 3 && r <= 11, size = chosen ? 's33' : 's23';
  html += `<tr><th class="${size}${chosen ? ' sel' : ''}">${r}</th>`;
  cols.forEach((c, i) => {
    if (c === 'C' && r === 2) return;
    let cls = '', text = '', span = '';
    if (i === 1 && r <= 11) cls = 'dkr';
    if (i >= 2 && i <= 9 && r <= 11) {
      cls = 'dk';
      if (r <= 2) cls += ' blue';
      if (c === 'C') { cls += ' area'; text = r === 1 ? '区域' : areas[r - 3]; if (r === 1) span = ' rowspan="2"'; }
      if (c === 'J' && r > 2) cls += ' pick';
      if (c === 'J' && r === 11) { cls += ' pick-end'; text = '<i class="fill-handle position-absolute"></i>'; }
    }
    html += `<td class="${cls}"${span}>${text}</td>`;
  });
  html += '</tr>';
}
document.querySelector('#grid tbody').innerHTML = html;
</script>
<script src="https://cdn.jsdelivr.net/npm/bootstrap@5.3.0/dist/js/bootstrap.bundle.min.js"></script>
</body>
</html>
